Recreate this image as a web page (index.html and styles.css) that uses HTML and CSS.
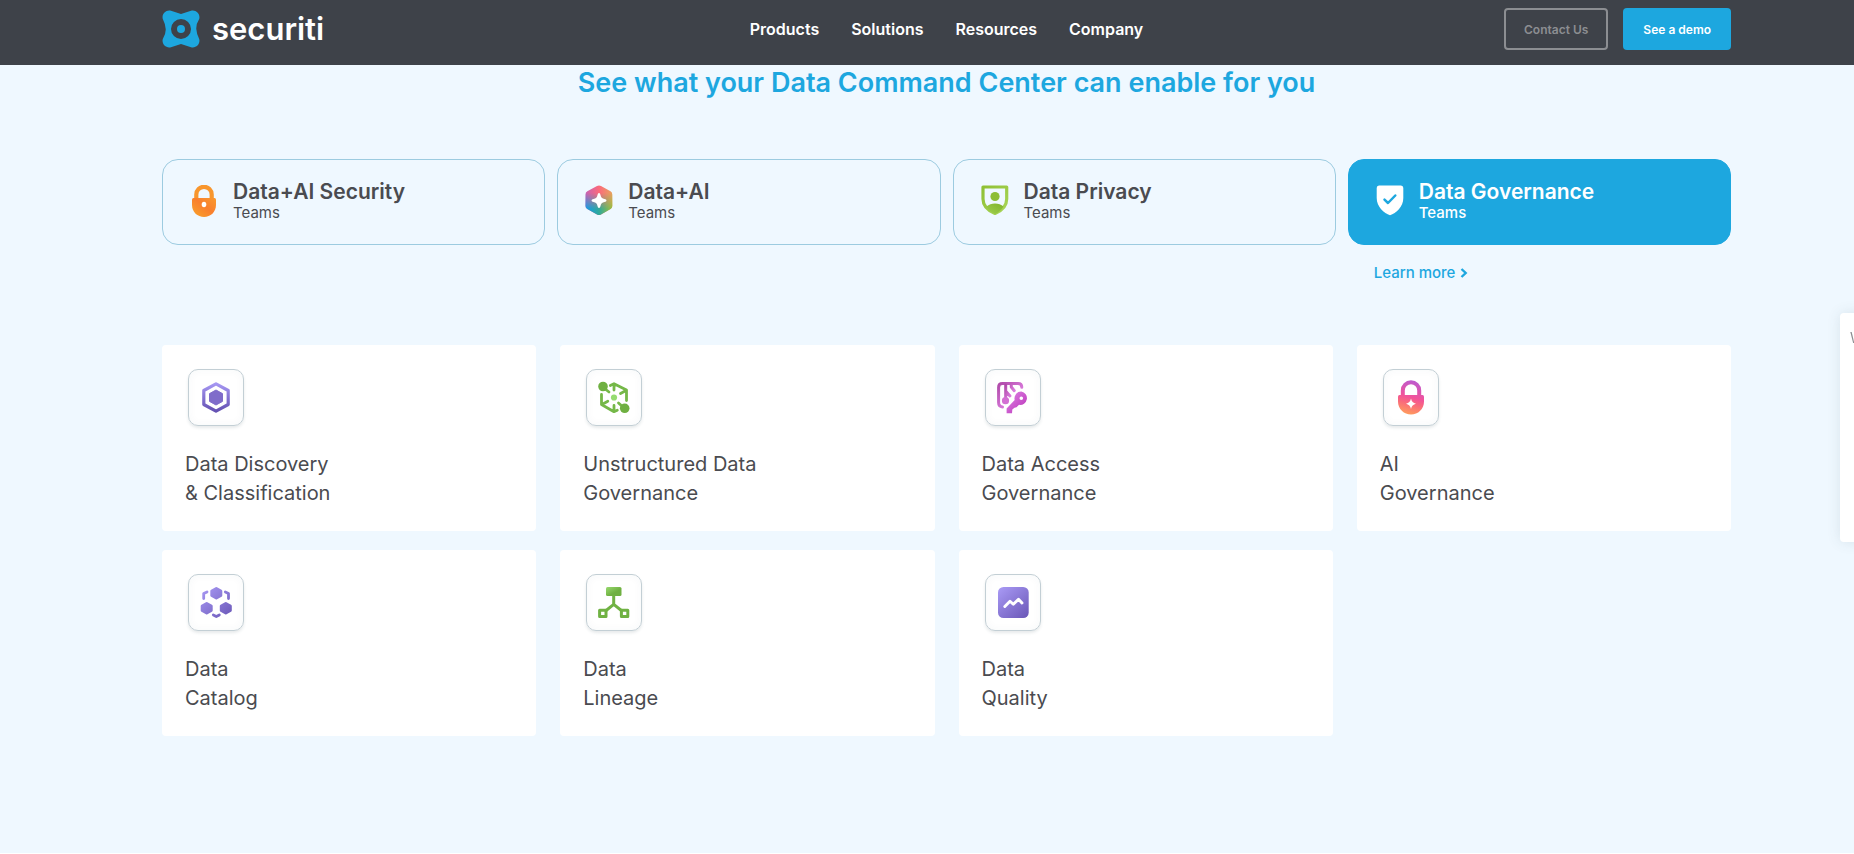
FILE: index.html
```html
<!DOCTYPE html>
<html lang="en">
<head>
<meta charset="utf-8">
<meta name="viewport" content="width=device-width, initial-scale=1">
<title>Securiti – Data Command Center</title>
<link rel="stylesheet" href="styles.css">
</head>
<body>
<header class="site-header">
  <div class="container header-row">
    <a class="logo" href="#">
      <svg class="logo-mark" viewBox="0 0 38 38" aria-hidden="true">
        <path fill="#1da7df" fill-rule="evenodd" d="M9 .8L19 4L29 .8C34-.6 38.600 4 37.200 9Q34 14 34.300 19T37.200 29C38.600 34 34 38.600 29 37.200L19 34L9 37.200C4 38.600-.6 34 .8 29Q4 24 3.700 19T.8 9C-.6 4 4-.6 9 .8Z M19 9a10 10 0 1 0 0 20a10 10 0 1 0 0-20Z"/>
        <circle cx="19" cy="19" r="4" fill="#1da7df"/>
      </svg>
      <span class="logo-text">securiti</span>
    </a>
    <nav class="main-nav" aria-label="Main">
      <a href="#">Products</a>
      <a href="#">Solutions</a>
      <a href="#">Resources</a>
      <a href="#">Company</a>
    </nav>
    <div class="header-actions">
      <a class="btn btn-outline" href="#">Contact Us</a>
      <a class="btn btn-solid" href="#">See a demo</a>
    </div>
  </div>
</header>

<main class="teams">
  <div class="container">
    <h2 class="teams-title">See what your Data Command Center can enable for you</h2>

    <div class="tabs">
      <button class="tab" type="button">
        <svg class="tab-icon" viewBox="0 0 32 32" aria-hidden="true">
          <defs><linearGradient id="orange" x1="0" y1="1" x2="1" y2="0"><stop offset="0" stop-color="#f9a52b"/><stop offset=".55" stop-color="#f97f2d"/><stop offset="1" stop-color="#f99a2e"/></linearGradient></defs>
          <path fill="none" stroke="#f8962d" stroke-width="4.200" d="M8.300 14V9.500a7.700 7.700 0 0 1 15.400 0v4.500"/>
          <path fill="url(#orange)" d="M4 14.500Q4 13 5.500 13h21Q28 13 28 14.500V20C28 27 22.500 32 16 32S4 27 4 20Z"/>
          <ellipse cx="16" cy="19.500" rx="2.300" ry="2.700" fill="#fff"/>
        </svg>
        <span class="tab-label"><span class="tab-name">Data+AI Security</span><span class="tab-sub">Teams</span></span>
      </button>
      <button class="tab" type="button">
        <svg class="tab-icon" viewBox="0 0 32 32" aria-hidden="true">
          <defs>
            <linearGradient id="rainbowTop" x1="0" y1="0" x2="1" y2="0"><stop offset="0" stop-color="#c763b4"/><stop offset=".5" stop-color="#fb6a7c"/><stop offset="1" stop-color="#e8a35f"/></linearGradient>
            <linearGradient id="rainbowBottom" x1="0" y1="0" x2="1" y2="0"><stop offset="0" stop-color="#159be8"/><stop offset=".5" stop-color="#2fa99c"/><stop offset="1" stop-color="#9cbf3c"/></linearGradient>
            <linearGradient id="fadeDown" x1="0" y1="0" x2="0" y2="1"><stop offset=".25" stop-color="#000"/><stop offset=".75" stop-color="#fff"/></linearGradient>
            <mask id="lowerHalf"><rect width="32" height="32" fill="url(#fadeDown)"/></mask>
          </defs>
          <path fill="url(#rainbowTop)" d="M14 1Q16 0 18 1L27.500 6.200Q29.300 7.300 29.300 9.500V21Q29.300 23 27.500 24L18 29.400Q16 30.500 14 29.400L4.300 24Q2.500 23 2.500 21V9.500Q2.500 7.300 4.300 6.200Z"/>
          <path mask="url(#lowerHalf)" fill="url(#rainbowBottom)" d="M14 1Q16 0 18 1L27.500 6.200Q29.300 7.300 29.300 9.500V21Q29.300 23 27.500 24L18 29.400Q16 30.500 14 29.400L4.300 24Q2.500 23 2.500 21V9.500Q2.500 7.300 4.300 6.200Z"/>
          <path fill="#fff" d="M16 8Q17.200 8 17.500 10Q18 13.500 21.500 14Q23.500 14.300 23.500 15.500T21.500 17Q18 17.500 17.500 21Q17.200 23 16 23T14.500 21Q14 17.500 10.500 17Q8.500 16.700 8.500 15.500T10.500 14Q14 13.500 14.500 10Q14.800 8 16 8Z"/>
        </svg>
        <span class="tab-label"><span class="tab-name">Data+AI</span><span class="tab-sub">Teams</span></span>
      </button>
      <button class="tab" type="button">
        <svg class="tab-icon" viewBox="0 0 32 32" aria-hidden="true">
          <defs>
            <linearGradient id="lime" x1="0" y1="0" x2="1" y2="1"><stop offset="0" stop-color="#8fc033"/><stop offset="1" stop-color="#a9d65a"/></linearGradient>
            <linearGradient id="limeDark" x1="0" y1="1" x2="1" y2="0"><stop offset="0" stop-color="#9fcf4f"/><stop offset="1" stop-color="#80b32a"/></linearGradient>
          </defs>
          <path fill="none" stroke="url(#lime)" stroke-width="3.200" stroke-linejoin="round" d="M4 2H27.700V14C27.700 21 22 26 16 28.500C10 26 4 21 4 14Z"/>
          <circle cx="16" cy="11.500" r="4.600" fill="#8dbd35"/>
          <path fill="url(#limeDark)" d="M7.500 21.500Q11 18.500 16 18.500T24.500 21.500Q21 27 16 29Q11 27 7.500 21.500Z"/>
        </svg>
        <span class="tab-label"><span class="tab-name">Data Privacy</span><span class="tab-sub">Teams</span></span>
      </button>
      <button class="tab tab-active" type="button">
        <svg class="tab-icon" viewBox="0 0 32 32" aria-hidden="true">
          <path fill="#fff" d="M5 .5H27Q29.300.5 29.300 3V13C29.300 22 22 28 16 30.300C10 28 2.700 22 2.700 13V3Q2.700.5 5 .5Z"/>
          <path fill="none" stroke="#1da7df" stroke-width="2.500" stroke-linecap="round" stroke-linejoin="round" d="M10.500 14.700L14 18L21.300 10.500"/>
        </svg>
        <span class="tab-label"><span class="tab-name">Data Governance</span><span class="tab-sub">Teams</span></span>
      </button>
      <a class="learn-more" href="#">Learn more
        <svg class="chevron" viewBox="0 0 8 10" aria-hidden="true"><path fill="none" stroke="currentColor" stroke-width="2.400" d="M1.500 1L5.700 5L1.500 9"/></svg>
      </a>
    </div>

    <div class="cards">
      <a class="card" href="#">
        <span class="card-icon">
          <svg viewBox="0 0 32 32" aria-hidden="true">
            <defs><linearGradient id="violet" x1="0" y1="0" x2="0" y2="1"><stop offset="0" stop-color="#a596f2"/><stop offset="1" stop-color="#6552b3"/></linearGradient></defs>
            <path fill="none" stroke="url(#violet)" stroke-width="3.200" stroke-linejoin="round" d="M16 1.800L28.200 8.500V22.500L16 29.200L3.800 22.500V8.500Z"/>
            <path fill="#7f6cca" stroke="#7f6cca" stroke-linejoin="round" d="M16 8L22.500 11.600V19.400L16 23L9.500 19.400V11.600Z"/>
          </svg>
        </span>
        <span class="card-title">Data Discovery<br>&amp; Classification</span>
      </a>
      <a class="card" href="#">
        <span class="card-icon">
          <svg viewBox="0 0 32 32" aria-hidden="true">
            <g fill="none" stroke="#75b848" stroke-width="2.800" stroke-linecap="round" stroke-linejoin="round">
              <path d="M12.300 3.500L16 1.700L28.500 8V18.500M28 8.500L22.500 11.500M3.500 12.500V22.500L16 29.700L19.300 28.300M4 22.500L9.800 19.300M16 3V8M16 23.500V28.500M6 6L11 10M20.500 21L25 25"/>
            </g>
            <circle cx="5" cy="4.500" r="4.800" fill="#6fb041"/>
            <circle cx="26.700" cy="26.300" r="4.800" fill="#6fb041"/>
            <circle cx="16" cy="15.500" r="3.100" fill="#95dc70"/>
          </svg>
        </span>
        <span class="card-title">Unstructured Data<br>Governance</span>
      </a>
      <a class="card" href="#">
        <span class="card-icon">
          <svg viewBox="0 0 32 32" aria-hidden="true">
            <defs>
              <linearGradient id="magenta" x1="0" y1="0" x2="1" y2="1"><stop offset="0" stop-color="#b04aa9"/><stop offset=".7" stop-color="#dd7ee0"/></linearGradient>
              <linearGradient id="key" x1="0" y1="0" x2="1" y2="1"><stop offset=".2" stop-color="#d977dd"/><stop offset=".8" stop-color="#bf40c0"/></linearGradient>
            </defs>
            <g fill="none" stroke="url(#magenta)" stroke-width="3" stroke-linecap="round" stroke-linejoin="round">
              <path d="M5.500 25Q1.600 24.500 1.600 20.500V5.500Q1.600 1.600 5.500 1.600H21Q24.800 1.600 24.800 5.300"/>
              <path d="M8.700 3V18M9 9.500L13 14M14.300 3V5L17.300 8.700"/>
            </g>
            <circle cx="8.500" cy="18.700" r="3.600" fill="#d36fd3"/>
            <path fill="url(#key)" fill-rule="evenodd" d="M24.300 9.600A6.700 6.700 0 1 1 22 22.800L19.500 25.300L17.500 25.800L15.300 27.500L15 31.200H9.600V26.600L17.700 18A6.700 6.700 0 0 1 24.300 9.600ZM24.300 14.400A1.800 1.800 0 1 0 24.300 18A1.800 1.800 0 1 0 24.300 14.400Z"/>
          </svg>
        </span>
        <span class="card-title">Data Access<br>Governance</span>
      </a>
      <a class="card" href="#">
        <span class="card-icon">
          <svg viewBox="0 0 32 32" aria-hidden="true">
            <defs><linearGradient id="sunset" gradientUnits="userSpaceOnUse" x1="20" y1="-2" x2="11" y2="32"><stop offset="0" stop-color="#b95bd2"/><stop offset=".5" stop-color="#f2529a"/><stop offset=".68" stop-color="#f96a7c"/><stop offset="1" stop-color="#ff9d5c"/></linearGradient></defs>
            <path fill="none" stroke="url(#sunset)" stroke-width="4" d="M7.800 14V8.500a8.200 8.200 0 0 1 16.400 0V14"/>
            <path fill="url(#sunset)" d="M3 14.500Q3 13 4.500 13h23Q29 13 29 14.500V19.500C29 27 23 32.600 16 32.600S3 27 3 19.500Z"/>
            <path fill="#fff" d="M16 16.500Q16.800 20.700 21 21.700Q16.800 22.700 16 27Q15.200 22.700 11 21.700Q15.200 20.700 16 16.500Z"/>
          </svg>
        </span>
        <span class="card-title">AI<br>Governance</span>
      </a>
      <a class="card" href="#">
        <span class="card-icon">
          <svg viewBox="0 0 32 32" aria-hidden="true">
            <defs><linearGradient id="violetWide" gradientUnits="userSpaceOnUse" x1="2" y1="0" x2="30" y2="31"><stop offset="0" stop-color="#a99af5"/><stop offset="1" stop-color="#6b58b8"/></linearGradient></defs>
            <g fill="url(#violetWide)" stroke="url(#violetWide)" stroke-width="3" stroke-linejoin="round">
              <path d="M16.300 1.500L20.800 4V8.500L16.300 11L11.800 8.500V4Z"/>
              <path d="M6.700 16.500L11.200 19V23.500L6.700 26L2.200 23.500V19Z"/>
              <path d="M25.800 16.500L30.300 19V23.500L25.800 26L21.300 23.500V19Z"/>
            </g>
            <path fill="none" stroke="url(#violetWide)" stroke-width="2.800" stroke-linecap="round" stroke-linejoin="round" d="M3.700 11.500V6.500L7 4.900M25.300 4.900L28.500 6.500V11.500M13.300 28L16.300 29.500L19.300 28"/>
          </svg>
        </span>
        <span class="card-title">Data<br>Catalog</span>
      </a>
      <a class="card" href="#">
        <span class="card-icon">
          <svg viewBox="0 0 32 32" aria-hidden="true">
            <defs><linearGradient id="leaf" x1="0" y1="0" x2="1" y2="1"><stop offset="0" stop-color="#97d96f"/><stop offset=".6" stop-color="#6fb041"/></linearGradient></defs>
            <rect x="8" y="0" width="15.500" height="9" rx="1.500" fill="url(#leaf)"/>
            <g fill="none" stroke="#70b243" stroke-width="3" stroke-linejoin="round">
              <path d="M15.700 8V17.500M7.500 24L15.700 17.300L24 24"/>
              <rect x="1.600" y="23.300" width="6.400" height="6.200"/>
              <rect x="23.400" y="23.300" width="6.400" height="6.200"/>
            </g>
          </svg>
        </span>
        <span class="card-title">Data<br>Lineage</span>
      </a>
      <a class="card" href="#">
        <span class="card-icon">
          <svg viewBox="0 0 32 32" aria-hidden="true">
            <rect x="1" y="0" width="30.700" height="31" rx="5.500" fill="url(#violetWide)"/>
            <path fill="none" stroke="#fff" stroke-width="2.900" stroke-linecap="round" stroke-linejoin="round" d="M7.800 19.500L13 14.300L16.300 17.300L21.500 12.200L25 16"/>
          </svg>
        </span>
        <span class="card-title">Data<br>Quality</span>
      </a>
    </div>
  </div>
</main>

<aside class="chat-panel">W</aside>
</body>
</html>
```

FILE: styles.css
```css
* {
  box-sizing: border-box;
}

body {
  margin: 0;
  background: #fff;
  color: #4a4b50;
  font-family: "ITC Avant Garde Gothic", Inter, "Liberation Sans", sans-serif;
  overflow-x: hidden;
}

a {
  color: inherit;
  text-decoration: none;
}

.container {
  padding: 0 123px 0 162px;
}

.site-header {
  background: #3e4249;
  padding: 8px 0 15px;
}

.header-row {
  display: grid;
  grid-template-columns: 1fr auto 1fr;
  align-items: center;
}

.logo {
  display: flex;
  align-items: center;
  gap: 12px;
  color: #fff;
}

.logo-mark {
  width: 38px;
  height: 38px;
}

.logo-text {
  font-size: 31px;
  line-height: 36px;
  font-weight: 600;
}

.main-nav {
  display: flex;
  gap: 32px;
  color: #fff;
  font-size: 16px;
  font-weight: 600;
}

.header-actions {
  display: flex;
  justify-content: flex-end;
  gap: 15px;
}

.btn {
  display: flex;
  align-items: center;
  height: 42px;
  padding: 0 20px;
  border-radius: 4px;
  font-size: 12px;
  font-weight: 600;
}

.btn-outline {
  padding: 0 18px;
  border: 2px solid #8c8e92;
  color: #8c8e92;
}

.btn-solid {
  background: #1da7df;
  color: #fff;
}

.teams {
  background: #eff8ff;
  padding-bottom: 117px;
}

.teams-title {
  margin: 0 0 58px;
  color: #1da7df;
  font-size: 27px;
  line-height: 36px;
  font-weight: 600;
  text-align: center;
}

.tabs {
  display: grid;
  grid-template-columns: repeat(4, 1fr);
  column-gap: 12px;
  row-gap: 16px;
}

.tab {
  display: flex;
  align-items: center;
  gap: 13px;
  height: 86px;
  padding: 0 25px 2px;
  border: 1px solid #9ccbe0;
  border-radius: 16px;
  background: transparent;
  color: inherit;
  font-family: inherit;
  text-align: left;
  cursor: pointer;
}

.tab-active {
  border-color: #1da7df;
  background: #1da7df;
  color: #fff;
}

.tab-icon {
  flex: none;
  width: 32px;
  height: 32px;
}

.tab-label {
  display: flex;
  flex-direction: column;
}

.tab-name {
  font-size: 21px;
  line-height: 24px;
  font-weight: 600;
}

.tab-sub {
  font-size: 15px;
  line-height: 18px;
  font-weight: 400;
}

.tab-active .tab-sub {
  font-weight: 500;
}

.learn-more {
  grid-column: 4;
  display: flex;
  align-items: center;
  gap: 5px;
  padding-left: 26px;
  color: #1da7df;
  font-size: 15px;
  line-height: 24px;
  font-weight: 500;
}

.chevron {
  width: 8px;
  height: 10px;
}

.cards {
  display: grid;
  grid-template-columns: repeat(4, 1fr);
  column-gap: 24px;
  row-gap: 19px;
  margin-top: 60px;
}

.card {
  display: flex;
  flex-direction: column;
  gap: 24px;
  padding: 24px 23px 23px;
  border-radius: 4px;
  background: #fff;
}

.card-icon {
  display: flex;
  align-items: center;
  justify-content: center;
  width: 56px;
  height: 57px;
  margin-left: 3px;
  border: 1px solid #c3cfd5;
  border-radius: 10px;
  box-shadow: 0 2px 3px rgba(60, 80, 90, 0.12), inset 0 0 8px rgba(60, 80, 90, 0.04);
}

.card-icon svg {
  width: 32px;
  height: 32px;
  overflow: visible;
}

.card-title {
  font-size: 20px;
  line-height: 29px;
}

.chat-panel {
  position: fixed;
  top: 313px;
  right: -286px;
  width: 300px;
  height: 229px;
  padding: 16px 10px;
  border-radius: 4px;
  background: #fff;
  box-shadow: 0 0 14px rgba(60, 80, 90, 0.12);
  color: #8c8e92;
  font-size: 14px;
  line-height: 18px;
}
```
